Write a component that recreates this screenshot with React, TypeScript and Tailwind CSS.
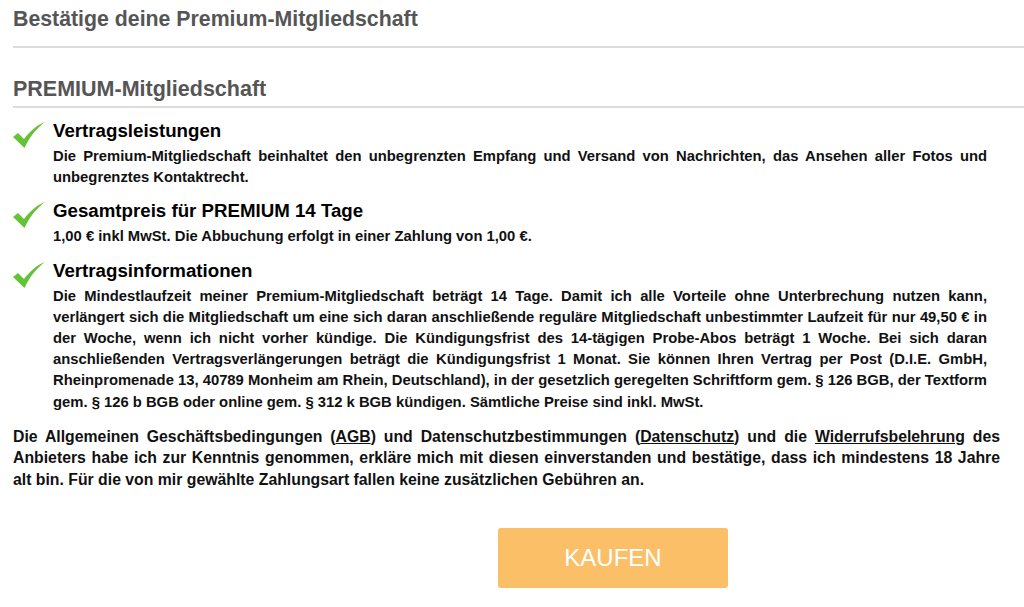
const Check = () => (
  <svg width="32" height="26" viewBox="0 0 32 26" className="shrink-0">
    <path d="M0 15 L5 11 L11 17 C17 9 24 3 32 0 C24 6 17 14 11.5 26 Z" fill="#63c336" />
  </svg>
);

type Item = { title: string; body: string };

const items: Item[] = [
  {
    title: "Vertragsleistungen",
    body: "Die Premium-Mitgliedschaft beinhaltet den unbegrenzten Empfang und Versand von Nachrichten, das Ansehen aller Fotos und unbegrenztes Kontaktrecht.",
  },
  {
    title: "Gesamtpreis für PREMIUM 14 Tage",
    body: "1,00 € inkl MwSt. Die Abbuchung erfolgt in einer Zahlung von 1,00 €.",
  },
  {
    title: "Vertragsinformationen",
    body: "Die Mindestlaufzeit meiner Premium-Mitgliedschaft beträgt 14 Tage. Damit ich alle Vorteile ohne Unterbrechung nutzen kann, verlängert sich die Mitgliedschaft um eine sich daran anschließende reguläre Mitgliedschaft unbestimmter Laufzeit für nur 49,50 € in der Woche, wenn ich nicht vorher kündige. Die Kündigungsfrist des 14-tägigen Probe-Abos beträgt 1 Woche. Bei sich daran anschließenden Vertragsverlängerungen beträgt die Kündigungsfrist 1 Monat. Sie können Ihren Vertrag per Post (D.I.E. GmbH, Rheinpromenade 13, 40789 Monheim am Rhein, Deutschland), in der gesetzlich geregelten Schriftform gem. § 126 BGB, der Textform gem. § 126 b BGB oder online gem. § 312 k BGB kündigen. Sämtliche Preise sind inkl. MwSt.",
  },
];

export default function App() {
  return (
    <div className="min-h-[607px] bg-white pl-[13px] font-['Liberation_Sans',Arial,sans-serif]">
      <h1 className="border-b-2 border-[#dcdcdc] pt-[6px] pb-[14px] text-[21.3px] leading-[26px] font-bold text-[#555]">
        Bestätige deine Premium-Mitgliedschaft
      </h1>

      <h2 className="mt-[27px] border-b-2 border-[#dcdcdc] pb-[3px] text-[21.5px] leading-[28px] font-bold text-[#555]">
        PREMIUM-Mitgliedschaft
      </h2>

      <div className="mt-[12px] mr-[37px] flex flex-col gap-[12px]">
        {items.map((item) => (
          <div key={item.title} className="flex gap-[8px]">
            <div className="pt-[2px]">
              <Check />
            </div>
            <div className="flex-1">
              <div className="text-[18.7px] leading-[22px] font-bold text-black">{item.title}</div>
              <p className="mt-[4px] text-justify text-[14.8px] leading-[21.2px] font-bold text-[#111]">
                {item.body}
              </p>
            </div>
          </div>
        ))}
      </div>

      <p className="mt-[13px] mr-[24px] text-justify text-[15.8px] leading-[21.5px] font-bold text-[#111]">
        Die Allgemeinen Geschäftsbedingungen (<span className="underline">AGB</span>) und
        Datenschutzbestimmungen (<span className="underline">Datenschutz</span>) und die{" "}
        <span className="underline">Widerrufsbelehrung</span> des Anbieters habe ich zur Kenntnis
        genommen, erkläre mich mit diesen einverstanden und bestätige, dass ich mindestens 18 Jahre
        alt bin. Für die von mir gewählte Zahlungsart fallen keine zusätzlichen Gebühren an.
      </p>

      <div className="mt-[38px] pl-[485px]">
        <button className="flex h-[60px] w-[230px] items-center justify-center rounded-[3px] bg-[#fbbf68] text-[24px] text-white">
          KAUFEN
        </button>
      </div>
    </div>
  );
}
